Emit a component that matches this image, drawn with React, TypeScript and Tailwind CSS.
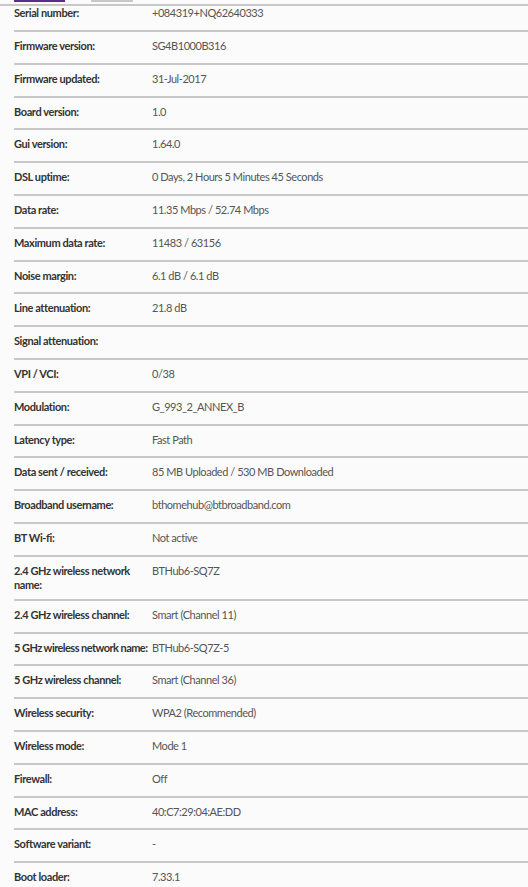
const rows: { label: string; value: string; nowrap?: boolean }[] = [
  { label: "Firmware version:", value: "SG4B1000B316" },
  { label: "Firmware updated:", value: "31-Jul-2017" },
  { label: "Board version:", value: "1.0" },
  { label: "Gui version:", value: "1.64.0" },
  { label: "DSL uptime:", value: "0 Days, 2 Hours 5 Minutes 45 Seconds" },
  { label: "Data rate:", value: "11.35 Mbps / 52.74 Mbps" },
  { label: "Maximum data rate:", value: "11483 / 63156" },
  { label: "Noise margin:", value: "6.1 dB / 6.1 dB" },
  { label: "Line attenuation:", value: "21.8 dB" },
  { label: "Signal attenuation:", value: "" },
  { label: "VPI / VCI:", value: "0/38" },
  { label: "Modulation:", value: "G_993_2_ANNEX_B" },
  { label: "Latency type:", value: "Fast Path" },
  { label: "Data sent / received:", value: "85 MB Uploaded / 530 MB Downloaded" },
  { label: "Broadband username:", value: "bthomehub@btbroadband.com" },
  { label: "BT Wi-fi:", value: "Not active" },
  { label: "2.4 GHz wireless network name:", value: "BTHub6-SQ7Z" },
  { label: "2.4 GHz wireless channel:", value: "Smart (Channel 11)" },
  { label: "5 GHz wireless network name:", value: "BTHub6-SQ7Z-5", nowrap: true },
  { label: "5 GHz wireless channel:", value: "Smart (Channel 36)" },
  { label: "Wireless security:", value: "WPA2 (Recommended)" },
  { label: "Wireless mode:", value: "Mode 1" },
  { label: "Firewall:", value: "Off" },
  { label: "MAC address:", value: "40:C7:29:04:AE:DD" },
  { label: "Software variant:", value: "-" },
  { label: "Boot loader:", value: "7.33.1" },
];

export default function App() {
  return (
    <div
      className="min-h-[887px] bg-[#fbfbfb] text-[11px] leading-[14px]"
      style={{ fontFamily: "Lato, 'Liberation Sans', sans-serif" }}
    >
      {/* Tabs */}
      <div className="flex h-[4px]">
        <div className="ml-[14px] h-[2px] w-[51px] bg-[#5a2d91]" />
        <div className="ml-[26px] h-[2px] w-[42px] bg-[#c8c8c8]" />
      </div>
      <div className="h-[2px] bg-[#c8c8c8]" />

      <div className="pl-[14px]">
        <div className="grid h-[24px] grid-cols-[138px_1fr]">
          <span className="font-bold tracking-[-0.4px] text-[#333]">Serial number:</span>
          <span className="tracking-[-0.45px] text-[#555]">+084319+NQ62640333</span>
        </div>
        {rows.map((r) => (
          <div
            key={r.label}
            className="grid min-h-[32.8px] grid-cols-[138px_1fr] border-t-2 border-[#c8c8c8] py-[7px]"
          >
            <span
              className={
                r.nowrap
                  ? "whitespace-nowrap font-bold tracking-[-0.55px] text-[#333]"
                  : "font-bold tracking-[-0.4px] text-[#333]"
              }
            >
              {r.label}
            </span>
            <span className="tracking-[-0.45px] text-[#555]">{r.value}</span>
          </div>
        ))}
      </div>
    </div>
  );
}
